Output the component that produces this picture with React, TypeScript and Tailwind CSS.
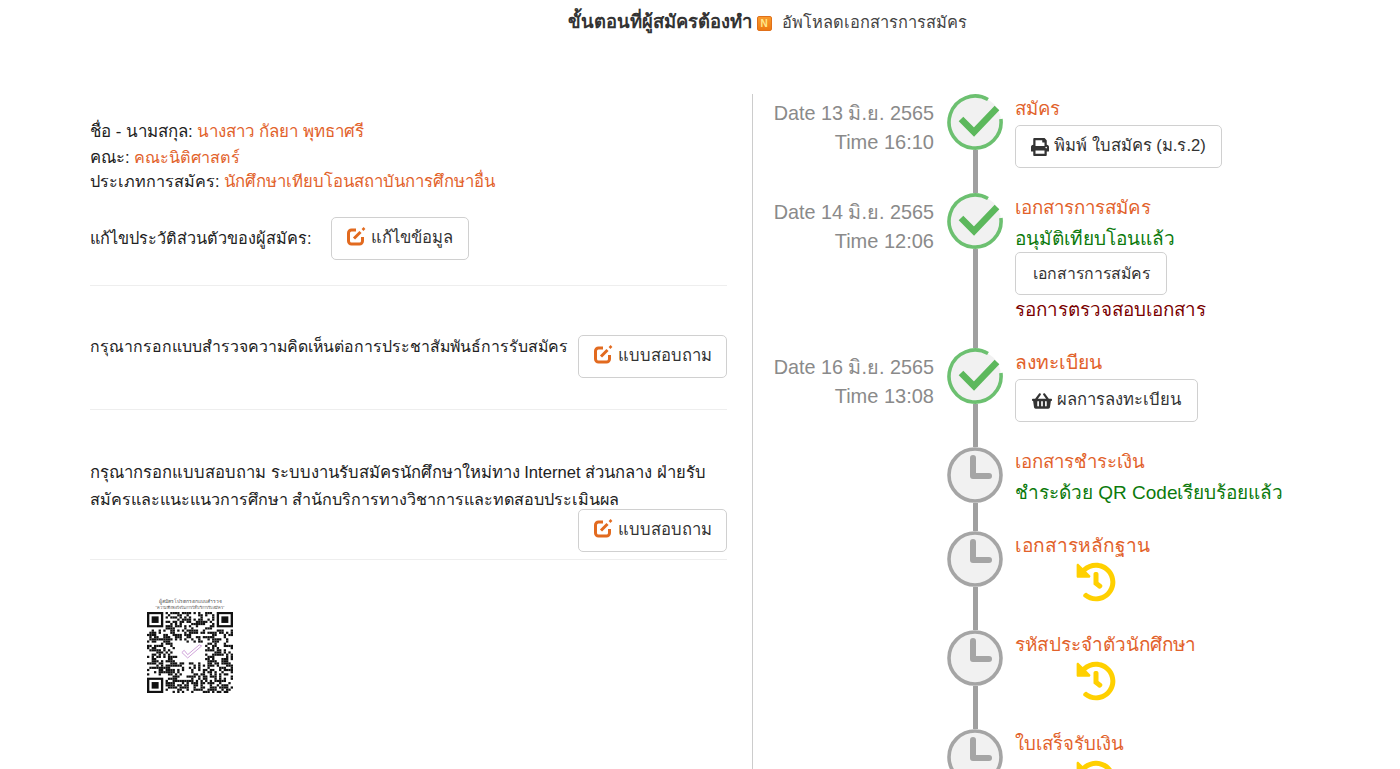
import React from "react";
import { FaPrint, FaShoppingBasket, FaHistory } from "react-icons/fa";

const font = { fontFamily: '"Liberation Sans", "Noto Sans", sans-serif' };

function CheckCircle() {
  return (
    <svg width="56" height="56" viewBox="0 0 56 56" className="block shrink-0">
      <circle cx="28" cy="28" r="26" fill="#f1f1f1" />
      <path d="M53.9 25 A26 26 0 1 1 41 5.5" fill="none" stroke="#6cc070" strokeWidth="3.6" />
      <path d="M14 25 L27 38 L50 14" fill="none" stroke="#5cb85c" strokeWidth="6.5" />
    </svg>
  );
}

function ClockCircle() {
  return (
    <svg width="56" height="56" viewBox="0 0 56 56" className="block shrink-0">
      <circle cx="28" cy="28" r="26" fill="#f1f1f1" stroke="#a5a5a5" strokeWidth="3.6" />
      <path d="M26 11 V29 H42" fill="none" stroke="#a5a5a5" strokeWidth="6" strokeLinecap="round" strokeLinejoin="round" />
    </svg>
  );
}

function Btn({ icon, children, className = "" }: { icon?: React.ReactNode; children: React.ReactNode; className?: string }) {
  return (
    <div className={`inline-flex h-[43px] shrink-0 items-center justify-center gap-[5px] rounded-[5px] border border-[#d0d0d0] bg-white text-[16.6px] text-[#333] ${className}`}>
      {icon}
      <span>{children}</span>
    </div>
  );
}

const EditIcon = () => (
  <svg width="19" height="19" viewBox="0 0 19 19" className="-mt-[3px] block shrink-0">
    <path d="M9 3 H4.500 A3 3 0 0 0 1.500 6 V14 A3 3 0 0 0 4.500 17 H12.500 A3 3 0 0 0 15.500 14 V10" fill="none" stroke="#e26a1f" strokeWidth="3" />
    <path d="M7 11.500 L13.500 5" fill="none" stroke="#e26a1f" strokeWidth="3" />
    <path d="M15.500 3 L17.500 1" fill="none" stroke="#e26a1f" strokeWidth="2.500" />
  </svg>
);

function QR() {
  const n = 37;
  const cells: React.ReactNode[] = [];
  let seed = 12345;
  const rnd = () => {
    seed = (seed * 1103515245 + 12345) & 0x7fffffff;
    return (seed >> 16) / 32767;
  };
  const inFinder = (x: number, y: number) =>
    (x < 8 && y < 8) || (x >= n - 8 && y < 8) || (x < 8 && y >= n - 8);
  for (let y = 0; y < n; y++) {
    for (let x = 0; x < n; x++) {
      if (inFinder(x, y)) continue;
      if (x >= 13 && x < 25 && y >= 14 && y < 23) continue;
      if (rnd() > 0.5) cells.push(<rect key={`${x}-${y}`} x={x} y={y} width="1" height="1" fill="#111" />);
    }
  }
  const finder = (x: number, y: number) => (
    <g key={`f${x}${y}`}>
      <rect x={x} y={y} width="7" height="7" fill="#111" />
      <rect x={x + 1} y={y + 1} width="5" height="5" fill="#fff" />
      <rect x={x + 2} y={y + 2} width="3" height="3" fill="#111" />
    </g>
  );
  return (
    <svg width="86" height="81" viewBox="0 0 37 37" preserveAspectRatio="none" className="block">
      {cells}
      {finder(0, 0)}
      {finder(n - 7, 0)}
      {finder(0, n - 7)}
      <path d="M15 18.500 L17.500 21 L23.500 15.500 L22.500 15 L17.500 19.500 L16 17.500 Z" fill="none" stroke="#c48bd0" strokeWidth="0.35" />
    </svg>
  );
}

function Row({
  date,
  time,
  done,
  last,
  h,
  children,
}: {
  date?: string;
  time?: string;
  done?: boolean;
  last?: boolean;
  h: string;
  children: React.ReactNode;
}) {
  return (
    <div className={`flex ${h}`}>
      <div className="w-[194px] pr-[13px] text-right text-[20px] leading-[29px] text-[#8a8a8a]">
        {date && <div className="mt-[5px] text-[19.800px]">{date}</div>}
        {time && <div>{time}</div>}
      </div>
      <div className="flex w-[56px] flex-col items-center">
        {done ? <CheckCircle /> : <ClockCircle />}
        {!last && <div className="w-[5px] flex-1 bg-[#a0a0a0]" />}
      </div>
      <div className="pl-[12px] pt-[1px]">{children}</div>
    </div>
  );
}

const Title = ({ children, size = "text-[18.600px]" }: { children: React.ReactNode; size?: string }) => (
  <div className={`${size} h-[28px] leading-[28px] text-[#e2622b]`}>{children}</div>
);

const Hist = () => (
  <div className="mt-[2px] pl-[61px]">
    <FaHistory size={40} className="text-[#ffd000]" />
  </div>
);

export default function App() {
  return (
    <div className="h-[769px] overflow-hidden bg-white text-[#222]" style={font}>
      <div className="flex h-[94px] justify-center pl-[134px] pt-[10px] text-[16.400px] leading-[24px]">
        <span className="text-[18.400px] font-bold text-[#333]">ขั้นตอนที่ผู้สมัครต้องทำ</span>
        <span className="mx-[5px] mt-[6px] flex h-[15px] w-[15px] items-center justify-center rounded-[2px] border border-[#e0701a] bg-gradient-to-b from-[#f89a2c] to-[#ee7a10] text-[10px] font-bold text-[#ffe98a]">
          N
        </span>
        <span className="ml-[5px] text-[#444]">อัพโหลดเอกสารการสมัคร</span>
      </div>
      <div className="flex">
        <div className="ml-[90px] w-[637px] shrink-0 pt-[26px] text-[16.600px] leading-[24.500px]">
          <div className="h-[25px] text-[16.900px]">
            ชื่อ - นามสกุล: <span className="text-[#e2622b]">นางสาว กัลยา พุทธาศรี</span>
          </div>
          <div className="h-[24px]">
            คณะ: <span className="text-[16.200px] text-[#e2622b]">คณะนิติศาสตร์</span>
          </div>
          <div className="h-[24.500px]">
            <span className="text-[16.200px]">ประเภทการสมัคร: </span>
            <span className="text-[16.700px] text-[#e2622b]">นักศึกษาเทียบโอนสถาบันการศึกษาอื่น</span>
          </div>
          <div className="mt-[23px] flex items-center">
            <span className="text-[16.250px]">แก้ไขประวัติส่วนตัวของผู้สมัคร:</span>
            <Btn icon={<EditIcon />} className="ml-[19px] w-[138px]">แก้ไขข้อมูล</Btn>
          </div>
          <hr className="mt-[25px] border-[#eeeeee]" />
          <div className="mt-[49px] flex items-start justify-between">
            <span className="whitespace-nowrap text-[15.850px]">กรุณากรอกแบบสำรวจความคิดเห็นต่อการประชาสัมพันธ์การรับสมัคร</span>
            <Btn icon={<EditIcon />} className="w-[149px]">แบบสอบถาม</Btn>
          </div>
          <hr className="mt-[31px] border-[#eeeeee]" />
          <div className="mt-[50px] leading-[26px]">
            <div className="h-[26px]">กรุณากรอกแบบสอบถาม ระบบงานรับสมัครนักศึกษาใหม่ทาง Internet ส่วนกลาง ฝ่ายรับ</div>
            <div className="h-[26px] text-[16.150px]">สมัครและแนะแนวการศึกษา สำนักบริการทางวิชาการและทดสอบประเมินผล</div>
          </div>
          <div className="mt-[-3px] flex justify-end">
            <Btn icon={<EditIcon />} className="w-[149px]">แบบสอบถาม</Btn>
          </div>
          <hr className="mt-[7px] border-[#eeeeee]" />
          <div className="ml-[57px] mt-[38px] w-[86px]">
            <div className="whitespace-nowrap text-center text-[5px] leading-[7px] text-[#555]">ผู้สมัครโปรดกรอกแบบสำรวจ</div>
            <div className="mb-[1px] whitespace-nowrap text-center text-[4px] leading-[6px] text-[#555]">"ความพึงพอใจในการให้บริการรับสมัคร"</div>
            <QR />
          </div>
        </div>
        <div className="ml-[25px] h-[675px] border-l border-[#cccccc]" />
        <div className="flex-1 self-start">
          <Row date="Date 13 มิ.ย. 2565" time="Time 16:10" done h="h-[99px]">
            <Title>สมัคร</Title>
            <Btn icon={<FaPrint size={18} className="text-[#333]" />} className="mt-[2px] w-[207px]">พิมพ์ ใบสมัคร (ม.ร.2)</Btn>
          </Row>
          <Row date="Date 14 มิ.ย. 2565" time="Time 12:06" done h="h-[155px]">
            <Title size="text-[18.700px]">เอกสารการสมัคร</Title>
            <div className="mt-[3px] text-[19px] leading-[28px] text-[#0c7a0c]">อนุมัติเทียบโอนแล้ว</div>
            <Btn className="mt-[-1px] w-[152px] [&>span]:text-[15.800px]">เอกสารการสมัคร</Btn>
            <div className="mt-[1px] text-[18.800px] leading-[28px] text-[#7a0000]">รอการตรวจสอบเอกสาร</div>
          </Row>
          <Row date="Date 16 มิ.ย. 2565" time="Time 13:08" done h="h-[99px]">
            <Title size="text-[19.300px]">ลงทะเบียน</Title>
            <Btn icon={<FaShoppingBasket size={20} className="text-[#333]" />} className="mt-[2px] w-[183px]">ผลการลงทะเบียน</Btn>
          </Row>
          <Row h="h-[84px]">
            <Title>เอกสารชำระเงิน</Title>
            <div className="mt-[3px] text-[19px] leading-[28px] text-[#0c7a0c]">ชำระด้วย QR Codeเรียบร้อยแล้ว</div>
          </Row>
          <Row h="h-[99px]">
            <Title size="text-[19.100px]">เอกสารหลักฐาน</Title>
            <Hist />
          </Row>
          <Row h="h-[99px]">
            <Title size="text-[18.900px]">รหัสประจำตัวนักศึกษา</Title>
            <Hist />
          </Row>
          <Row last h="h-[99px]">
            <Title>ใบเสร็จรับเงิน</Title>
            <Hist />
          </Row>
        </div>
      </div>
    </div>
  );
}
